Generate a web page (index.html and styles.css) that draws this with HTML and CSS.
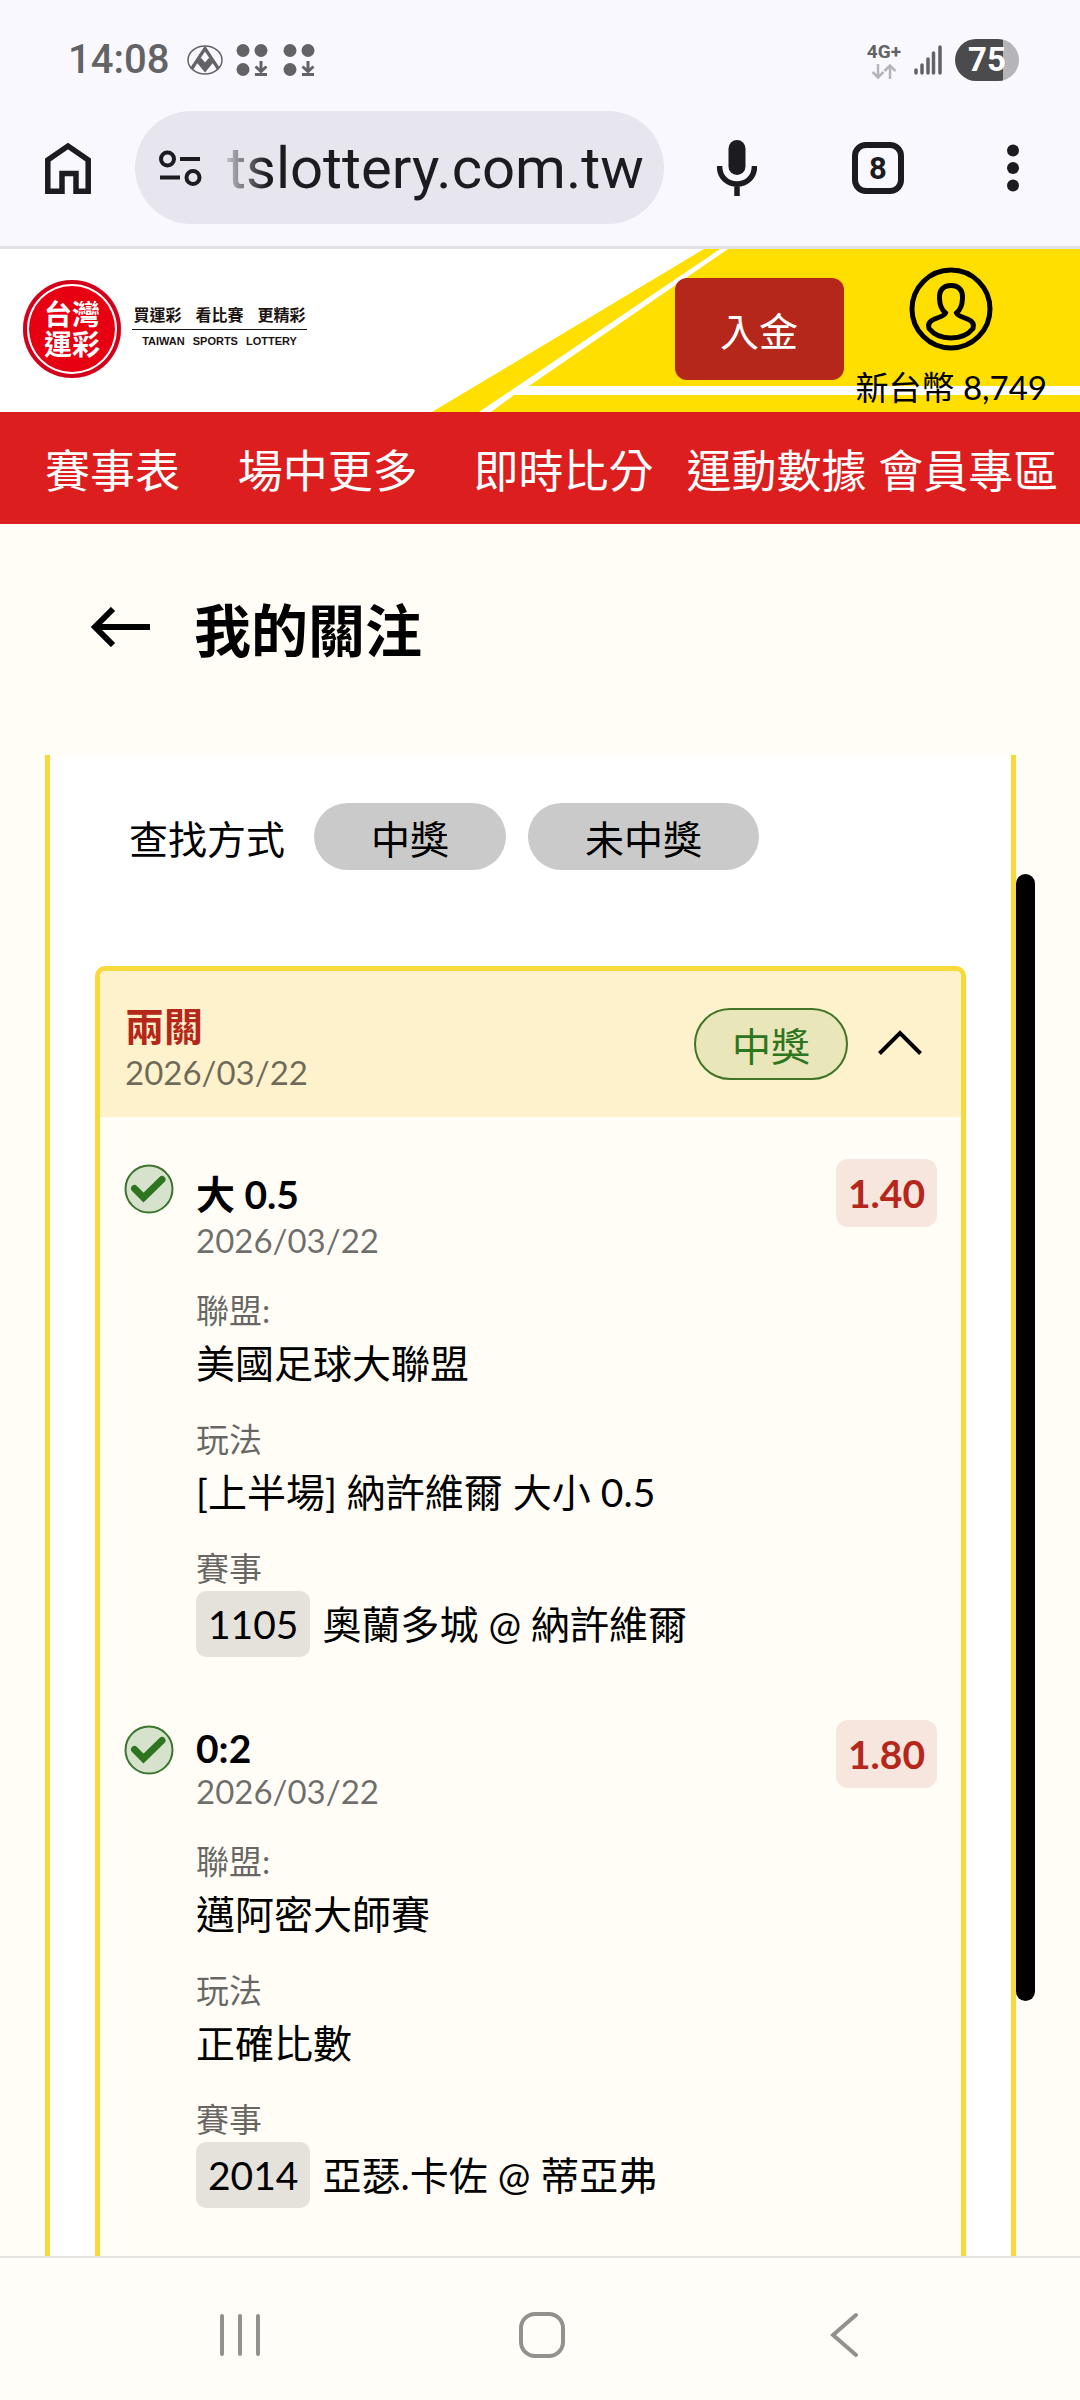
FILE: index.html
```html
<!DOCTYPE html>
<html lang="zh-Hant">
<head>
<meta charset="utf-8">
<meta name="viewport" content="width=device-width, initial-scale=1">
<title>我的關注 - 台灣運彩</title>
<link rel="stylesheet" href="styles.css">
</head>
<body>
<div class="screen">
  <div class="browser">
    <div class="status">
      <div class="status-group">
        <span class="clock">14:08</span>
        <svg class="status-app" width="36" height="30" viewBox="0 0 36 30" fill="none" stroke="#636366"><ellipse cx="18" cy="15" rx="17" ry="14" stroke-width="1.5"/><path d="M4.500 24 18 3.500 31.500 24M11 16.500 18 25l7-8.500M13 14l5 6 5-6" stroke-width="3.200"/></svg>
        <svg class="status-dots" width="32" height="32" viewBox="0 0 32 32" fill="#636366"><circle cx="7" cy="6.500" r="6.500"/><circle cx="25" cy="6.500" r="6.500"/><circle cx="7" cy="25.500" r="6.500"/><path d="M25 17v10M19.500 22.500l5.500 5 5.500-5M19 30.500h12" fill="none" stroke="#636366" stroke-width="3"/></svg>
        <svg class="status-dots" width="32" height="32" viewBox="0 0 32 32" fill="#636366"><circle cx="7" cy="6.500" r="6.500"/><circle cx="25" cy="6.500" r="6.500"/><circle cx="7" cy="25.500" r="6.500"/><path d="M25 17v10M19.500 22.500l5.500 5 5.500-5M19 30.500h12" fill="none" stroke="#636366" stroke-width="3"/></svg>
      </div>
      <div class="status-group">
        <div class="network">
          <span>4G+</span>
          <svg width="24" height="15" viewBox="0 0 24 15" fill="none" stroke="#b5b5b9" stroke-width="2.500"><path d="M6 0v13M0.500 8 6 13.500 11.500 8M18 15V2M12.500 7 18 1.500 23.500 7"/></svg>
        </div>
        <svg class="signal" width="28" height="30" viewBox="0 0 28 30" stroke="#636366" stroke-width="3.500" stroke-linecap="round"><path d="M2 25v3M8 20v8M14 14v14M19.500 8v20M26 2v26"/></svg>
        <span class="battery">75</span>
      </div>
    </div>
    <div class="toolbar">
      <button class="tool home" aria-label="首頁"><svg width="46" height="52" viewBox="0 0 46 52" fill="none" stroke="#1b1b20" stroke-width="5.500"><path d="M2.800 49.200V18L23 4l20.200 14v31.200H31V31.500H17v17.700z"/></svg></button>
      <div class="address">
        <svg width="43" height="36" viewBox="0 0 43 36" fill="none" stroke="#1b1b20" stroke-width="4"><circle cx="8.500" cy="9" r="6.500"/><circle cx="34" cy="27.500" r="6.500"/><path d="M21 9h20M1 27.500h20"/></svg>
        <input class="url" type="text" aria-label="網址" value="tslottery.com.tw">
      </div>
      <button class="tool mic" aria-label="語音搜尋"><svg width="40" height="56" viewBox="0 0 40 56"><rect x="11.500" y="0" width="17" height="35" rx="8.500" fill="#1b1b20"/><path d="M2.500 26c0 24 35 24 35 0M20 44v12" fill="none" stroke="#1b1b20" stroke-width="5.500"/></svg></button>
      <button class="tool tabs" aria-label="分頁"><span>8</span></button>
      <button class="tool menu" aria-label="選單"><svg width="12" height="48" viewBox="0 0 12 48" fill="#1b1b20"><circle cx="6" cy="6.500" r="6"/><circle cx="6" cy="24" r="6"/><circle cx="6" cy="41.500" r="6"/></svg></button>
    </div>
  </div>

  <header class="site-header">
    <svg class="header-art" width="648" height="163" viewBox="0 0 648 163" aria-hidden="true"><path d="M0 163 272 0h16L47 163zM59 163l23-17h566v17zM97 137 296 0h352v137z" fill="#ffdf00"/></svg>
    <a class="brand" href="#">
      <span class="seal"><span>台灣</span><span>運彩</span></span>
      <span class="slogan">
        <span class="slogan-zh"><span>買運彩</span><span>看比賽</span><span>更精彩</span></span>
        <span class="slogan-en"><span>TAIWAN</span><span>SPORTS</span><span>LOTTERY</span></span>
      </span>
    </a>
    <div class="header-side">
      <button class="deposit">入金</button>
      <a class="account" href="#">
        <svg width="84" height="84" viewBox="0 0 84 84" fill="none" stroke="#000" stroke-width="5"><circle cx="42" cy="42" r="39"/><path d="M42 18.500c-8 0-12 5-11.500 13 .3 8 3 12 6 14.500-1 3-6 4-11 6-5 2-7 5-5.500 9.500C26 69 34 71 42 71s16-2 22-9.500c1.500-4.500-.5-7.500-5.500-9.500-5-2-10-3-11-6 3-2.500 5.700-6.500 6-14.500.5-8-3.500-13-11.500-13z"/></svg>
        <span>新台幣 8,749</span>
      </a>
    </div>
  </header>
  <nav class="site-nav">
    <a href="#">賽事表</a><a href="#">場中更多</a><a href="#">即時比分</a><a href="#">運動數據</a><a href="#">會員專區</a>
  </nav>

  <div class="page-title">
    <button class="back" aria-label="返回"><svg width="60" height="40" viewBox="0 0 60 40" fill="none" stroke="#000" stroke-width="6"><path d="M60 20H4M23 2 5 20l18 18"/></svg></button>
    <h1>我的關注</h1>
  </div>

  <main class="content">
    <section class="panel">
      <div class="filter">
        <span>查找方式</span>
        <button class="pill">中獎</button>
        <button class="pill">未中獎</button>
      </div>
      <article class="card">
        <header class="card-head">
          <div class="card-name">
            <h2>兩關</h2>
            <span class="date">2026/03/22</span>
          </div>
          <span class="won">中獎</span>
          <button class="toggle" aria-label="收合"><svg width="44" height="30" viewBox="0 0 44 30" fill="none" stroke="#000" stroke-width="4"><path d="M1.500 24.500 22 4l20.500 20.500"/></svg></button>
        </header>
        <section class="bet">
          <svg class="check" width="50" height="50" viewBox="0 0 50 50"><circle cx="25" cy="25" r="23.500" fill="#d7e2cd" stroke="#3b7530" stroke-width="2"/><path d="m10.500 24.500 9 9 18.500-18" fill="none" stroke="#2e7520" stroke-width="7" stroke-linecap="round"/></svg>
          <div class="bet-body">
            <h3>大 0.5</h3>
            <span class="date">2026/03/22</span>
            <dl>
              <dt>聯盟:</dt><dd>美國足球大聯盟</dd>
              <dt>玩法</dt><dd>[上半場] 納許維爾 大小 0.5</dd>
              <dt>賽事</dt><dd class="match"><span class="code">1105</span><span>奧蘭多城 @ 納許維爾</span></dd>
            </dl>
          </div>
          <span class="odds">1.40</span>
        </section>
        <section class="bet">
          <svg class="check" width="50" height="50" viewBox="0 0 50 50"><circle cx="25" cy="25" r="23.500" fill="#d7e2cd" stroke="#3b7530" stroke-width="2"/><path d="m10.500 24.500 9 9 18.500-18" fill="none" stroke="#2e7520" stroke-width="7" stroke-linecap="round"/></svg>
          <div class="bet-body">
            <h3>0:2</h3>
            <span class="date">2026/03/22</span>
            <dl>
              <dt>聯盟:</dt><dd>邁阿密大師賽</dd>
              <dt>玩法</dt><dd>正確比數</dd>
              <dt>賽事</dt><dd class="match"><span class="code">2014</span><span>亞瑟.卡佐 @ 蒂亞弗</span></dd>
            </dl>
          </div>
          <span class="odds">1.80</span>
        </section>
      </article>
    </section>
    <div class="scroll-track"><div class="scroll-thumb"></div></div>
  </main>

  <footer class="system-nav">
    <button aria-label="最近使用"><svg width="40" height="46" viewBox="0 0 40 46" stroke="#92918d" stroke-width="4" stroke-linecap="round"><path d="M2 4v38M20 4v38M38 4v38"/></svg></button>
    <button aria-label="主畫面"><svg width="46" height="46" viewBox="0 0 46 46" fill="none" stroke="#92918d" stroke-width="4"><rect x="2" y="2" width="42" height="42" rx="14"/></svg></button>
    <button aria-label="返回上一頁"><svg width="28" height="46" viewBox="0 0 28 46" fill="none" stroke="#92918d" stroke-width="4" stroke-linecap="round"><path d="M26 3 3 23l23 20"/></svg></button>
  </footer>
</div>
</body>
</html>
```
FILE: styles.css
```css
* { box-sizing: border-box; }
body {
  margin: 0;
  font-family: Lato, "Noto Sans CJK TC", sans-serif;
  font-size: 39px;
  color: #000;
  background: #fffdf5;
}
button { border: 0; padding: 0; margin: 0; background: none; font: inherit; color: inherit; }
a { color: inherit; text-decoration: none; }
h1, h2, h3, dl, dd { margin: 0; }
svg { display: block; flex: none; }

.screen { display: flex; flex-direction: column; height: 100vh; overflow: hidden; }

/* Browser chrome */
.browser { flex: none; background: #f9f8ff; border-bottom: 3px solid #e2e2e6; font-family: Roboto, sans-serif; }
.status { display: flex; justify-content: space-between; padding: 39px 61px 0 68px; height: 81px; }
.status-group { display: flex; align-items: center; color: #636366; }
.clock { font-size: 40px; font-weight: 500; line-height: 42px; margin-right: 18px; }
.status-app { margin-right: 13px; }
.status-dots { margin-right: 15px; }
.network { display: flex; flex-direction: column; align-items: center; gap: 2px; font-size: 19px; font-weight: 700; line-height: 20px; margin-right: 13px; }
.signal { margin-right: 13px; }
.battery {
  width: 64px; height: 42px; border-radius: 21px;
  background: linear-gradient(to right, #4b4b4d 75%, #b5b5b9 75%);
  color: #fff; font-size: 33px; font-weight: 700; line-height: 42px; text-align: center;
}
.toolbar { display: flex; align-items: center; padding: 30px 0 22px 45px; }
.tool { display: flex; justify-content: center; align-items: center; height: 113px; }
.home { width: 46px; margin-right: 44px; }
.address { flex: 1; min-width: 0; display: flex; align-items: center; gap: 25px; height: 113px; padding-left: 24px; border-radius: 57px; background: #e7e5ee; }
.url {
  flex: 1; min-width: 0; border: 0; padding: 0; background: none; color: #1b1b20;
  font-family: Roboto, sans-serif; font-size: 58px;
  -webkit-mask-image: linear-gradient(to right, rgba(0,0,0,0.2), #000 40px);
  mask-image: linear-gradient(to right, rgba(0,0,0,0.2), #000 40px);
}
.mic { width: 146px; }
.tabs { width: 136px; }
.tabs span { width: 52px; height: 52px; border: 6px solid #1b1b20; border-radius: 14px; color: #1b1b20; font-size: 31px; font-weight: 700; line-height: 41px; text-align: center; }
.menu { width: 134px; }

/* Site header */
.site-header { position: relative; flex: none; display: flex; justify-content: space-between; align-items: center; height: 163px; padding: 0 33px 3px 23px; background: #fff; overflow: hidden; }
.header-art { position: absolute; top: 0; right: 0; }
.brand { position: relative; display: flex; align-items: center; gap: 11px; }
.seal {
  display: flex; flex-direction: column; align-items: center; justify-content: center;
  width: 98px; height: 98px; border-radius: 50%; background: #e60012; color: #fff;
  box-shadow: inset 0 0 0 4px #d2001a, inset 0 0 0 6px #fff;
  font-size: 28px; font-weight: 700; line-height: 30px;
}
.slogan { display: flex; flex-direction: column; width: 175px; padding-bottom: 5px; color: #1a1311; }
.slogan-zh { display: flex; justify-content: center; gap: 14px; padding-bottom: 4px; border-bottom: 1px solid #1a1311; font-size: 16px; font-weight: 700; line-height: 20px; }
.slogan-en { display: flex; justify-content: center; gap: 8px; padding-top: 4px; font-family: "Liberation Sans", sans-serif; font-size: 11px; font-weight: 700; line-height: 14px; }
.header-side { position: relative; display: flex; align-items: center; gap: 12px; }
.deposit { width: 169px; height: 102px; border-radius: 12px; background: #b6271b; color: #fff; }
.account { display: flex; flex-direction: column; align-items: center; gap: 11px; padding-top: 19px; font-size: 33px; }
.site-nav {
  flex: none; display: grid; grid-template-columns: 193fr 236fr 213fr 192fr 202fr; align-items: center;
  height: 112px; padding-left: 45px; background: #dc1e1f; color: #fff; font-size: 45px; white-space: nowrap;
}

/* Page */
.page-title { flex: none; display: flex; align-items: center; gap: 44px; padding: 62px 90px 87px; }
.page-title h1 { font-size: 57px; font-weight: 700; }
.content { flex: 1; min-height: 0; display: flex; padding: 0 45px; overflow: hidden; }
.panel { flex: 1; min-width: 0; padding: 48px 45px; border: solid #f9d83a; border-width: 0 5px; background: #fff; }
.filter { display: flex; align-items: center; padding-left: 34px; margin-bottom: 96px; }
.filter span { margin-right: 29px; }
.pill { height: 67px; padding: 0 57px; margin-right: 22px; border-radius: 34px; background: #cacaca; }
.scroll-track { flex: none; width: 19px; padding-top: 119px; }
.scroll-thumb { height: 1127px; border-radius: 10px; background: #000; }

.card { border: 5px solid #f9d83a; border-radius: 10px; background: #fffdf6; overflow: hidden; padding-bottom: 120px; }
.card-head { display: flex; align-items: center; padding: 25px 39px 25px 25px; background: #fef2cc; }
.card-name { flex: 1; display: flex; flex-direction: column; }
.card-name h2 { font-size: 39px; font-weight: 700; color: #b6271b; }
.date { font-size: 33px; color: rgba(0, 0, 0, 0.58); }
.won { display: flex; align-items: center; height: 72px; padding: 0 36px; border: 2px solid #3f7527; border-radius: 36px; background: #e9e6b9; color: #2e7520; }
.toggle { margin-left: 30px; }

.bet { display: flex; align-items: flex-start; padding: 42px 24px 21px 24px; }
.check { margin: 5px 22px 0 0; }
.bet-body { flex: 1; min-width: 0; display: flex; flex-direction: column; padding-top: 5px; }
.bet-body h3 { font-size: 39px; font-weight: 700; }
.bet-body dt { margin-top: 25px; font-size: 33px; color: rgba(0, 0, 0, 0.6); }
.match { display: flex; align-items: baseline; gap: 12px; }
.code { padding: 10px 12px; border-radius: 10px; background: #e5e2dc; }
.odds { padding: 11px 12px; border-radius: 12px; background: #f7e6de; color: #b6271b; font-weight: 700; }

/* System navigation */
.system-nav { flex: none; display: grid; grid-template-columns: repeat(3, 1fr); height: 144px; padding: 12px 85px 0 89px; border-top: 2px solid #e4e3df; background: #fffdf8; }
.system-nav button { display: flex; align-items: center; justify-content: center; }
```
